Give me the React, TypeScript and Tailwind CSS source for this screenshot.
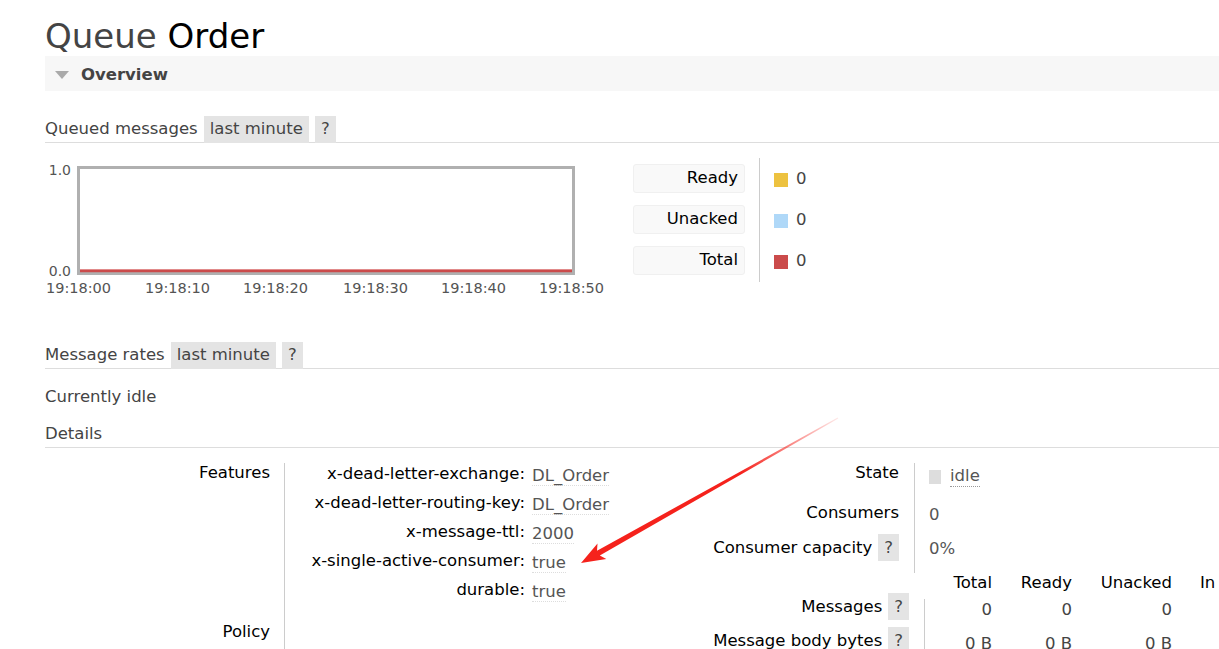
import React from "react";

function Chip({ children, className = "" }: { children: React.ReactNode; className?: string }) {
  return (
    <span className={`inline-flex h-[27px] items-center bg-[#e4e4e4] px-[6px] text-[#444] ${className}`}>
      {children}
    </span>
  );
}

function SectionHead({ title }: { title: string }) {
  return (
    <div className="flex h-[27px] items-center border-b border-[#ddd] text-[#444]">
      <span>{title}</span>
      <Chip className="ml-[6px]">last minute</Chip>
      <Chip className="ml-[6px]">?</Chip>
    </div>
  );
}

function Chart() {
  const xs = [
    { l: "19:18:00", x: 33.5 },
    { l: "19:18:10", x: 132.5 },
    { l: "19:18:20", x: 230.5 },
    { l: "19:18:30", x: 330.5 },
    { l: "19:18:40", x: 428.5 },
    { l: "19:18:50", x: 526.5 },
  ];
  return (
    <svg width="575" height="142" viewBox="0 0 575 142" className="block">
      <rect x="33.5" y="9.5" width="495" height="106" fill="#fff" stroke="#b0b0b0" strokeWidth="3" />
      <line x1="35" y1="111.5" x2="527" y2="111.5" stroke="#e8a0a0" strokeWidth="1" />
      <line x1="35" y1="113" x2="527" y2="113" stroke="#cb4b4b" strokeWidth="2.5" />
      <text x="26" y="17" textAnchor="end" fontSize="14" fill="#545454" fontFamily="DejaVu Sans, sans-serif">1.0</text>
      <text x="26" y="118" textAnchor="end" fontSize="14" fill="#545454" fontFamily="DejaVu Sans, sans-serif">0.0</text>
      {xs.map((t) => (
        <text key={t.l} x={t.x} y="135" textAnchor="middle" fontSize="14.5" fill="#545454" fontFamily="DejaVu Sans, sans-serif">
          {t.l}
        </text>
      ))}
    </svg>
  );
}

function Legend() {
  const items = [
    { l: "Ready", c: "bg-[#edc240]" },
    { l: "Unacked", c: "bg-[#afd8f8]" },
    { l: "Total", c: "bg-[#cb4b4b]" },
  ];
  return (
    <div className="ml-[13px] flex">
      <div className="flex w-[112px] flex-col gap-[12px] pt-[6px]">
        {items.map((i) => (
          <div
            key={i.l}
            className="flex h-[29px] items-center justify-end rounded-[3px] border border-[#f0f0f0] bg-[#f9f9f9] pr-[6px] text-black"
          >
            {i.l}
          </div>
        ))}
      </div>
      <div className="ml-[14px] h-[124px] w-px bg-[#ccc]" />
      <div className="flex flex-col gap-[12px] pl-[14px] pt-[7px]">
        {items.map((i) => (
          <div key={i.l} className="flex h-[29px] items-center">
            <span className={`h-[14px] w-[14px] ${i.c}`} />
            <span className="ml-[8px] text-[#444]">0</span>
          </div>
        ))}
      </div>
    </div>
  );
}

function Val({ children }: { children: React.ReactNode }) {
  return <span className="border-b border-dotted border-[#ddd] text-[#555]">{children}</span>;
}

function Features() {
  const rows = [
    ["x-dead-letter-exchange:", "DL_Order"],
    ["x-dead-letter-routing-key:", "DL_Order"],
    ["x-message-ttl:", "2000"],
    ["x-single-active-consumer:", "true"],
    ["durable:", "true"],
  ];
  return (
    <div className="grid w-[620px] shrink-0 grid-cols-[239px_1fr]">
      <div className="pr-[14px] text-right leading-[20px] text-black">Features</div>
      <div className="flex flex-col gap-[9px] border-l border-[#ccc] pt-[1px]">
        {rows.map(([k, v]) => (
          <div key={k} className="flex h-[20px] items-start leading-[20px]">
            <span className="w-[240px] whitespace-nowrap text-right text-black">{k}</span>
            <span className="relative top-[2px] ml-[7px] leading-[20px]">
              <Val>{v}</Val>
            </span>
          </div>
        ))}
      </div>
      <div className="pr-[14px] pt-[22px] text-right leading-[20px] text-black">Policy</div>
      <div className="h-[70px] border-l border-[#ccc]" />
    </div>
  );
}

function StateTable() {
  return (
    <div className="grid grid-cols-[249px_1fr]">
      <div className="h-[38px] pr-[15px] text-right leading-[20px] text-black">State</div>
      <div className="h-[38px] border-l border-[#ccc] pl-[14px] pt-[3px] leading-[20px]">
        <span className="inline-flex items-center">
          <span className="mr-[9px] h-[14px] w-[12px] bg-[#ddd]" />
          <span className="border-b border-dotted border-[#999] text-[#555]">idle</span>
        </span>
      </div>
      <div className="h-[33px] pr-[15px] pt-[2px] text-right leading-[20px] text-black">Consumers</div>
      <div className="h-[33px] border-l border-[#ccc] pl-[14px] pt-[4px] leading-[20px] text-[#555]">0</div>
      <div className="flex h-[39px] items-start justify-end pr-[15px] leading-[20px] text-black">
        <span className="flex h-[27px] items-center whitespace-nowrap">Consumer capacity</span>
        <Chip className="ml-[6px]">?</Chip>
      </div>
      <div className="h-[39px] border-l border-[#ccc] pl-[14px] pt-[5px] leading-[20px] text-[#555]">0%</div>
    </div>
  );
}

function MessagesTable() {
  const rows = [
    { l: "Messages", v: ["0", "0", "0"] },
    { l: "Message body bytes", v: ["0 B", "0 B", "0 B"] },
  ];
  return (
    <div className="grid grid-cols-[259px_1px_67px_80px_100px_auto] leading-[20px]">
      <div />
      <div />
      <div className="text-right text-black">Total</div>
      <div className="text-right text-black">Ready</div>
      <div className="text-right text-black">Unacked</div>
      <div className="whitespace-nowrap pl-[28px] text-black">In memory</div>
      {rows.map((r, idx) => (
        <React.Fragment key={r.l}>
          <div className="flex h-[34px] items-start justify-end pr-[15px] text-black">
            <span className="flex h-[27px] items-center whitespace-nowrap">{r.l}</span>
            <Chip className="ml-[6px]">?</Chip>
          </div>
          <div className={`bg-[#ccc] ${idx === 0 ? "mt-[6px]" : ""}`} />
          {r.v.map((v, j) => (
            <div key={j} className="whitespace-nowrap pt-[7px] text-right text-[#444]">
              {v}
            </div>
          ))}
          <div />
        </React.Fragment>
      ))}
    </div>
  );
}

function Arrow() {
  return (
    <svg className="pointer-events-none absolute left-0 top-0" width="1219" height="649" viewBox="0 0 1219 649">
      <defs>
        <linearGradient id="ag" gradientUnits="userSpaceOnUse" x1="838" y1="418" x2="740" y2="473">
          <stop offset="0" stopColor="#f5221c" stopOpacity="0.1" />
          <stop offset="1" stopColor="#f5221c" stopOpacity="1" />
        </linearGradient>
      </defs>
      <polygon
        points="838.3,418.4 599.8,555.6 606.3,559.0 581,563 597.5,543.4 597.0,550.8 837.7,417.6"
        fill="url(#ag)"
      />
    </svg>
  );
}

export default function App() {
  return (
    <div className="relative h-[649px] w-full overflow-hidden bg-white font-['DejaVu_Sans',Verdana,sans-serif] text-[16.5px] text-[#444]">
      <div className="pl-[45px]">
        <h1 className="pt-[17px] text-[34px] font-normal leading-[39px]">
          <span className="text-[#444]">Queue </span>
          <span className="text-black">Order</span>
        </h1>
        <div className="flex h-[35px] items-center bg-[#f7f7f7]">
          <span className="relative top-[1px] ml-[10px] h-0 w-0 border-x-[7px] border-t-[8px] border-x-transparent border-t-[#aaa]" />
          <span className="relative top-[2px] ml-[12px] font-bold text-[#444]">Overview</span>
        </div>

        <div className="mt-[25px]">
          <SectionHead title="Queued messages" />
        </div>

        <div className="mt-[15px] flex">
          <Chart />
          <Legend />
        </div>

        <div className="mt-[42px]">
          <SectionHead title="Message rates" />
        </div>

        <div className="mt-[18px] leading-[20px] text-[#444]">Currently idle</div>
        <div className="mt-[17px] border-b border-[#ddd] pb-[3px] leading-[20px] text-[#444]">Details</div>

        <div className="mt-[15px] flex">
          <Features />
          <div className="flex flex-col">
            <StateTable />
            <MessagesTable />
          </div>
        </div>
      </div>
      <Arrow />
    </div>
  );
}
